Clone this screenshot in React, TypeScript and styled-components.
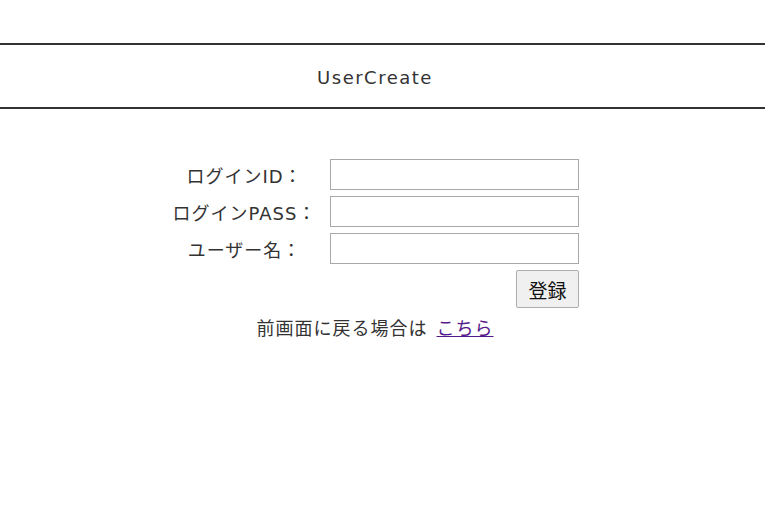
import { Fragment } from "react";
import styled, { createGlobalStyle } from "styled-components";

const GlobalStyle = createGlobalStyle`
  html, body {
    margin: 0;
    padding: 0;
    background: #fff;
    color: #333;
    font-family: "DejaVu Sans", "Noto Sans CJK JP", sans-serif;
  }
`;

const Page = styled.div`
  width: 765px;
  padding-top: 43px;
`;

const Header = styled.header`
  border-top: 2px solid #333;
  border-bottom: 2px solid #333;
  height: 62px;
  padding-right: 15px;
  display: flex;
  align-items: center;
  justify-content: center;
`;

const Title = styled.h1`
  margin: 2px 0 0;
  font-size: 18px;
  font-weight: normal;
  letter-spacing: 1.5px;
  color: #333;
`;

const Main = styled.main`
  padding: 50px 15px 0 0;
  display: flex;
  flex-direction: column;
  align-items: center;
`;

const Form = styled.form`
  display: grid;
  grid-template-columns: 146px 249px;
  column-gap: 12px;
  row-gap: 6px;
  align-items: center;
`;

const Label = styled.label`
  font-size: 18px;
  letter-spacing: 1px;
  text-align: center;
  white-space: nowrap;
  color: #333;
`;

const Input = styled.input`
  box-sizing: border-box;
  width: 249px;
  height: 31px;
  border: 1px solid #a9a9a9;
  padding: 2px 4px;
  font-size: 15px;
  outline: none;
`;

const ButtonCell = styled.div`
  grid-column: 2;
  display: flex;
  justify-content: flex-end;
`;

const Button = styled.button`
  height: 38px;
  padding: 0 11px;
  font-size: 19px;
  font-family: "Noto Sans CJK JP", sans-serif;
  color: #111;
  background: #f0f0f0;
  border: 1px solid #adadad;
  border-radius: 2px;
  cursor: pointer;
`;

const Back = styled.p`
  margin: 6px 0 0;
  font-size: 18px;
  letter-spacing: 1px;
  color: #333;
`;

const Link = styled.a`
  margin-left: 9px;
  color: #551a8b;
  text-decoration: underline;
`;

const fields = [
  { id: "loginId", label: "ログインID：", type: "text" },
  { id: "loginPass", label: "ログインPASS：", type: "password" },
  { id: "userName", label: "ユーザー名：", type: "text" },
];

const App = () => {
  return (
    <Page>
      <GlobalStyle />
      <Header>
        <Title>UserCreate</Title>
      </Header>
      <Main>
        <Form onSubmit={(e) => e.preventDefault()}>
          {fields.map((f) => (
            <Fragment key={f.id}>
              <Label htmlFor={f.id}>{f.label}</Label>
              <Input id={f.id} type={f.type} />
            </Fragment>
          ))}
          <ButtonCell>
            <Button type="submit">登録</Button>
          </ButtonCell>
        </Form>
        <Back>
          前画面に戻る場合は
          <Link href="#">こちら</Link>
        </Back>
      </Main>
    </Page>
  );
};

export default App;
